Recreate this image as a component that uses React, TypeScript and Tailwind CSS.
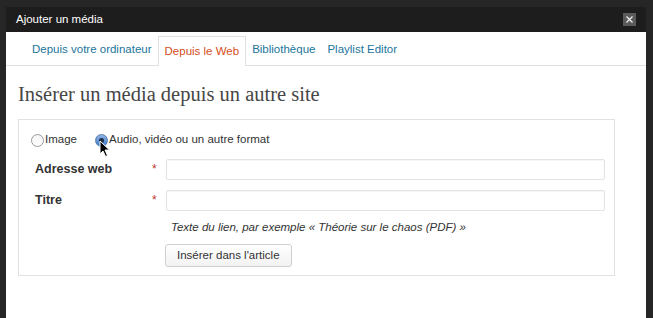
import React from "react";

const tabs = ["Depuis votre ordinateur", "Depuis le Web", "Bibliothèque", "Playlist Editor"];

const Cursor = () => (
  <svg width="12" height="18" viewBox="0 0 12 18" className="absolute left-[3px] top-[5px]">
    <path d="M1 1 L1 14 L4 11 L6.5 16.5 L8.5 15.5 L6 10 L10.5 10 Z" fill="#000" stroke="#fff" strokeWidth="1" />
  </svg>
);

const Field = ({ label }: { label: string }) => (
  <div className="flex items-center h-[20px] pl-[4px]">
    <div className="w-[117px] font-bold text-[12.5px] text-[#333]">{label}</div>
    <div className="w-[14px] text-[#c0392b] text-[12px]">*</div>
    <div className="flex-1 h-[21px] border border-[#e3e3e3] rounded-[2px] shadow-[inset_0_1px_1px_rgba(0,0,0,0.04)]" />
  </div>
);

export default function App() {
  return (
    <div className="w-[653px] h-[318px] bg-[#262626] overflow-hidden font-['Liberation_Sans',Arial,sans-serif] pt-[7px]">
      <div className="ml-[6px] w-[640px] h-[311px] bg-white flex flex-col">
        <div className="h-[25px] bg-[#1d1d1d] flex items-center justify-between pl-[10px] pr-[10px]">
          <span className="text-white text-[11.5px]">Ajouter un média</span>
          <span className="w-[13px] h-[13px] bg-[#5a5a5a] flex items-center justify-center">
            <svg width="7" height="7" viewBox="0 0 7 7">
              <path d="M0.5 0.5 L6.5 6.5 M6.5 0.5 L0.5 6.5" stroke="#eee" strokeWidth="1.3" />
            </svg>
          </span>
        </div>
        <div className="h-[34px] border-b border-[#dfdfdf] flex items-end pl-[20px] text-[11.5px]">
          {tabs.map((t, i) => (
            <div
              key={t}
              className={
                i === 1
                  ? "h-[30px] px-[6px] flex items-center border border-b-0 border-[#dfdfdf] bg-white text-[#d54e21] -mb-px"
                  : "h-[30px] px-[6px] flex items-center text-[#21759b]"
              }
            >
              {t}
            </div>
          ))}
        </div>
        <h2 className="mt-[15px] ml-[12px] text-[20.5px] leading-[26px] text-[#464646] font-['Liberation_Serif',Georgia,serif]">
          Insérer un média depuis un autre site
        </h2>
        <div className="mt-[12px] ml-[12px] w-[597px] h-[157px] border border-[#e2e2e2] pl-[12px] pr-[9px] pt-[11px]">
          <div className="flex items-center text-[11.5px] text-[#333] h-[18px]">
            <span className="w-[13px] h-[13px] rounded-full border border-[#9a9a9a] bg-gradient-to-b from-[#f4f4f4] to-white" />
            <span className="ml-px">Image</span>
            <span className="relative ml-[18px] w-[13px] h-[13px] rounded-full border border-[#5b7da8] bg-gradient-to-b from-[#8fb4e6] to-[#3d78c9] flex items-center justify-center">
              <span className="w-[5px] h-[5px] rounded-full bg-[#1e2d44]" />
              <Cursor />
            </span>
            <span className="ml-px">Audio, vidéo ou un autre format</span>
          </div>
          <div className="mt-[10px] flex flex-col gap-[11px]">
            <Field label="Adresse web" />
            <Field label="Titre" />
          </div>
          <div className="ml-[140px] mt-[9px] text-[11.5px] italic text-[#333]">
            Texte du lien, par exemple « Théorie sur le chaos (PDF) »
          </div>
          <button className="ml-[134px] mt-[8px] h-[23px] px-[11px] border border-[#cfcfcf] rounded-[3px] bg-gradient-to-b from-white to-[#f2f2f2] text-[11.5px] text-[#333]">
            Insérer dans l'article
          </button>
        </div>
      </div>
    </div>
  );
}
